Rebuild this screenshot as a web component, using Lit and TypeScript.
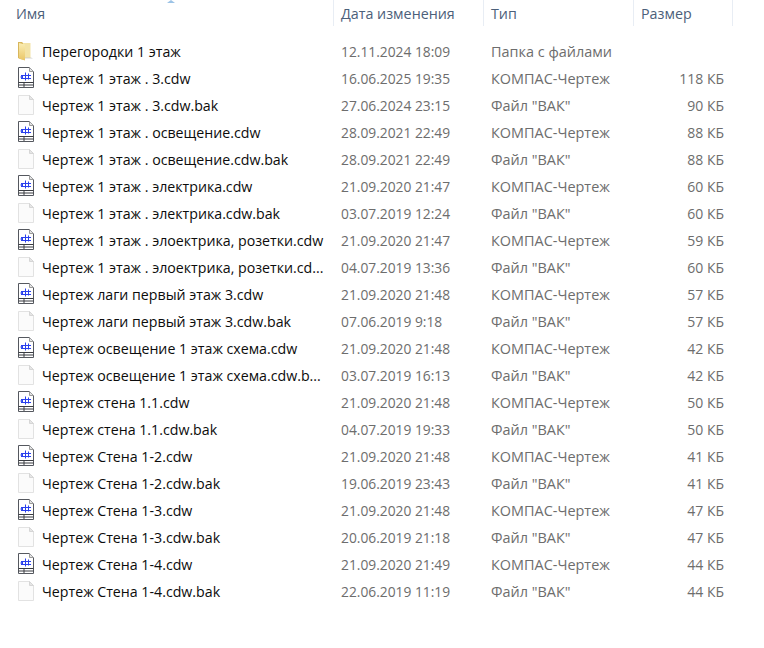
import { LitElement, html, css, svg } from "lit";
import { customElement } from "lit/decorators.js";

type Kind = "folder" | "cdw" | "bak";
const K = "КОМПАС-Чертеж", B = 'Файл "ВАК"';
const rows: [Kind, string, string, string, string][] = [
  ["folder", "Перегородки 1 этаж", "12.11.2024 18:09", "Папка с файлами", ""],
  ["cdw", "Чертеж 1 этаж . 3.cdw", "16.06.2025 19:35", K, "118 КБ"],
  ["bak", "Чертеж 1 этаж . 3.cdw.bak", "27.06.2024 23:15", B, "90 КБ"],
  ["cdw", "Чертеж 1 этаж . освещение.cdw", "28.09.2021 22:49", K, "88 КБ"],
  ["bak", "Чертеж 1 этаж . освещение.cdw.bak", "28.09.2021 22:49", B, "88 КБ"],
  ["cdw", "Чертеж 1 этаж . электрика.cdw", "21.09.2020 21:47", K, "60 КБ"],
  ["bak", "Чертеж 1 этаж . электрика.cdw.bak", "03.07.2019 12:24", B, "60 КБ"],
  ["cdw", "Чертеж 1 этаж . элоектрика, розетки.cdw", "21.09.2020 21:47", K, "59 КБ"],
  ["bak", "Чертеж 1 этаж . элоектрика, розетки.cd...", "04.07.2019 13:36", B, "60 КБ"],
  ["cdw", "Чертеж лаги первый этаж 3.cdw", "21.09.2020 21:48", K, "57 КБ"],
  ["bak", "Чертеж лаги первый этаж 3.cdw.bak", "07.06.2019 9:18", B, "57 КБ"],
  ["cdw", "Чертеж освещение 1 этаж схема.cdw", "21.09.2020 21:48", K, "42 КБ"],
  ["bak", "Чертеж освещение 1 этаж схема.cdw.b...", "03.07.2019 16:13", B, "42 КБ"],
  ["cdw", "Чертеж стена 1.1.cdw", "21.09.2020 21:48", K, "50 КБ"],
  ["bak", "Чертеж стена 1.1.cdw.bak", "04.07.2019 19:33", B, "50 КБ"],
  ["cdw", "Чертеж Стена 1-2.cdw", "21.09.2020 21:48", K, "41 КБ"],
  ["bak", "Чертеж Стена 1-2.cdw.bak", "19.06.2019 23:43", B, "41 КБ"],
  ["cdw", "Чертеж Стена 1-3.cdw", "21.09.2020 21:48", K, "47 КБ"],
  ["bak", "Чертеж Стена 1-3.cdw.bak", "20.06.2019 21:18", B, "47 КБ"],
  ["cdw", "Чертеж Стена 1-4.cdw", "21.09.2020 21:49", K, "44 КБ"],
  ["bak", "Чертеж Стена 1-4.cdw.bak", "22.06.2019 11:19", B, "44 КБ"],
];

const icons: Record<Kind, unknown> = {
  folder: svg`<svg class="svg" width="18" height="22" viewBox="0 0 18 22">
    <defs><linearGradient id="f" x1="0" y1="0" x2="0" y2="1"><stop offset="0" stop-color="#fbeeb4"/><stop offset="1" stop-color="#e9c566"/></linearGradient></defs>
    <path d="M1 2h4l1 1h7v15H8v2l-5-1-2-1z" fill="#d8b65c"/>
    <path d="M6 3h7.500v15H6z" fill="#f3e3a6"/>
    <path d="M2 3l6 1.500v16L2 18.500z" fill="url(#f)"/>
    <path d="M8 18.500h8l-2-1H8z" fill="#c8c8c4" opacity=".8"/></svg>`,
  cdw: svg`<svg class="svg" width="18" height="22" viewBox="0 0 18 22">
    <path d="M1.500 .5h11l4 4v16h-15z" fill="#fff" stroke="#55585f"/>
    <path d="M12.500 .5v4h4" fill="#e4e4e4" stroke="#9a9a9a"/>
    <path d="M4 8.500h10M4 11.500h10" stroke="#2a40ee" stroke-width="1" fill="none"/>
    <path d="M8.500 5.500v8M11.500 6.500v6" stroke="#2a40ee" stroke-width="1" fill="none"/>
    <path d="M3 10l3-1.800v3.600z" fill="#2a40ee"/>
    <path d="M1.500 15.500h15M1.500 18h15M7 15.500V20" stroke="#3a3c42" fill="none"/></svg>`,
  bak: svg`<svg class="svg" width="18" height="22" viewBox="0 0 18 22">
    <path d="M1.500 1.500h11l4 4v15h-15z" fill="#fbfbfb" stroke="#e2e2e2"/>
    <path d="M12.500 1.500v4h4z" fill="#e6e6e6" stroke="#d6d6d6"/></svg>`,
};

@customElement("app-root")
export class AppRoot extends LitElement {
  static styles = css`
    :host { display: block; width: 764px; height: 648px; background: #fff; overflow: hidden; position: relative;
      font-family: "Open Sans", "Noto Sans", sans-serif; font-size: 14px; }
    .grid { display: grid; grid-template-columns: 333px 150px 150px 100px; }
    .head { height: 25px; margin-bottom: 13px; color: #4c607a; font-size: 14.3px; }
    .head > div { display: flex; align-items: center; height: 26px; padding-left: 7px; border-left: 1px solid #e8edf4; box-sizing: border-box; }
    .head > div:first-child { padding-left: 16px; border-left: 0; }
    .head > div:last-child { border-right: 1px solid #e8edf4; }
    .row { height: 27px; align-items: center; color: #6d6d6d; }
    .name { display: flex; align-items: center; gap: 7px; padding-left: 17px; color: #0c0c0c; white-space: nowrap; font-size: 14.2px; }
    .icon { width: 18px; height: 22px; flex: none; margin-top: -2px; }
    .svg { display: block; }
    .cell { padding-left: 8px; white-space: nowrap; }
    .date { font-size: 13.8px; }
    .type { font-size: 14.45px; }
    .size { text-align: right; padding-right: 9px; }
    .mark { position: absolute; left: 167px; top: 0; width: 8px; height: 3px; background: #9cc3e6; clip-path: polygon(50% 0, 100% 100%, 0 100%); }
  `;
  render() {
    return html`<div class="mark"></div>
      <div class="grid head"><div>Имя</div><div>Дата изменения</div><div>Тип</div><div>Размер</div></div>
      ${rows.map(([k, n, d, t, s]) => html`<div class="grid row">
        <div class="name"><span class="icon">${icons[k]}</span>${n}</div>
        <div class="cell date">${d}</div><div class="cell type">${t}</div><div class="cell size">${s}</div>
      </div>`)}`;
  }
}
